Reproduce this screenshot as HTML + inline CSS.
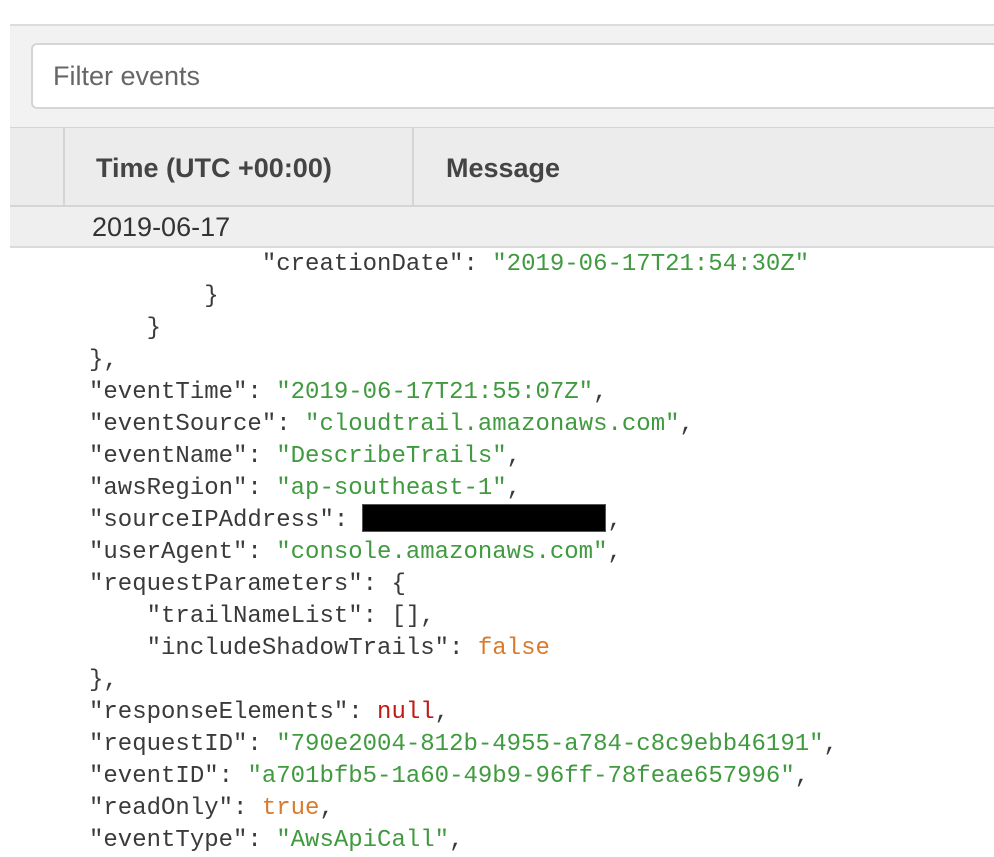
<!DOCTYPE html>
<html><head><meta charset="utf-8"><style>
*{margin:0;padding:0;box-sizing:border-box}
body{width:994px;height:854px;background:#fff;overflow:hidden;position:relative;font-family:"Liberation Sans",sans-serif}
.bar{position:absolute;left:10px;top:24px;width:984px;height:103px;background:#f2f2f2;border-top:2px solid #dcdcdc}
.inp{position:absolute;left:31px;top:43px;width:980px;height:66px;background:#fff;border:2px solid #d5d5d5;border-radius:6px;font-size:27px;color:#666;padding:16px 0 0 20px}
.hdr{position:absolute;left:10px;top:127px;width:984px;height:80px;background:#ececec;border-top:1px solid #d5d5d5;border-bottom:2px solid #d5d5d5}
.c1{position:absolute;left:53px;top:0;width:2px;height:78px;background:#d5d5d5}
.c2{position:absolute;left:402px;top:0;width:2px;height:78px;background:#d5d5d5}
.h{position:absolute;top:25px;font-size:27px;font-weight:bold;color:#444}
.date{position:absolute;left:10px;top:207px;width:984px;height:41px;background:#efefef;border-bottom:2px solid #dadada;font-size:27px;color:#333;padding:5px 0 0 82px}
pre{position:absolute;left:89px;top:249px;font-family:"Liberation Mono","DejaVu Sans Mono",monospace;font-size:24px;line-height:32px;color:#3a3a3a}
.s{color:#409a3f}.o{color:#d97a2c}.n{color:#c11a14}
.red{position:absolute;left:362px;top:504px;width:244px;height:28px;background:#000;border:1px solid #555}
</style></head><body>
<div class="bar"></div>
<div class="inp">Filter events</div>
<div class="hdr"><div class="c1"></div><div class="c2"></div>
<div class="h" style="left:86px">Time (UTC +00:00)</div>
<div class="h" style="left:436px">Message</div></div>
<div class="date">2019-06-17</div>
<pre>            "creationDate": <span class="s">"2019-06-17T21:54:30Z"</span>
        }
    }
},
"eventTime": <span class="s">"2019-06-17T21:55:07Z"</span>,
"eventSource": <span class="s">"cloudtrail.amazonaws.com"</span>,
"eventName": <span class="s">"DescribeTrails"</span>,
"awsRegion": <span class="s">"ap-southeast-1"</span>,
"sourceIPAddress":                  ,
"userAgent": <span class="s">"console.amazonaws.com"</span>,
"requestParameters": {
    "trailNameList": [],
    "includeShadowTrails": <span class="o">false</span>
},
"responseElements": <span class="n">null</span>,
"requestID": <span class="s">"790e2004-812b-4955-a784-c8c9ebb46191"</span>,
"eventID": <span class="s">"a701bfb5-1a60-49b9-96ff-78feae657996"</span>,
"readOnly": <span class="o">true</span>,
"eventType": <span class="s">"AwsApiCall"</span>,</pre>
<div class="red"></div>
</body></html>
